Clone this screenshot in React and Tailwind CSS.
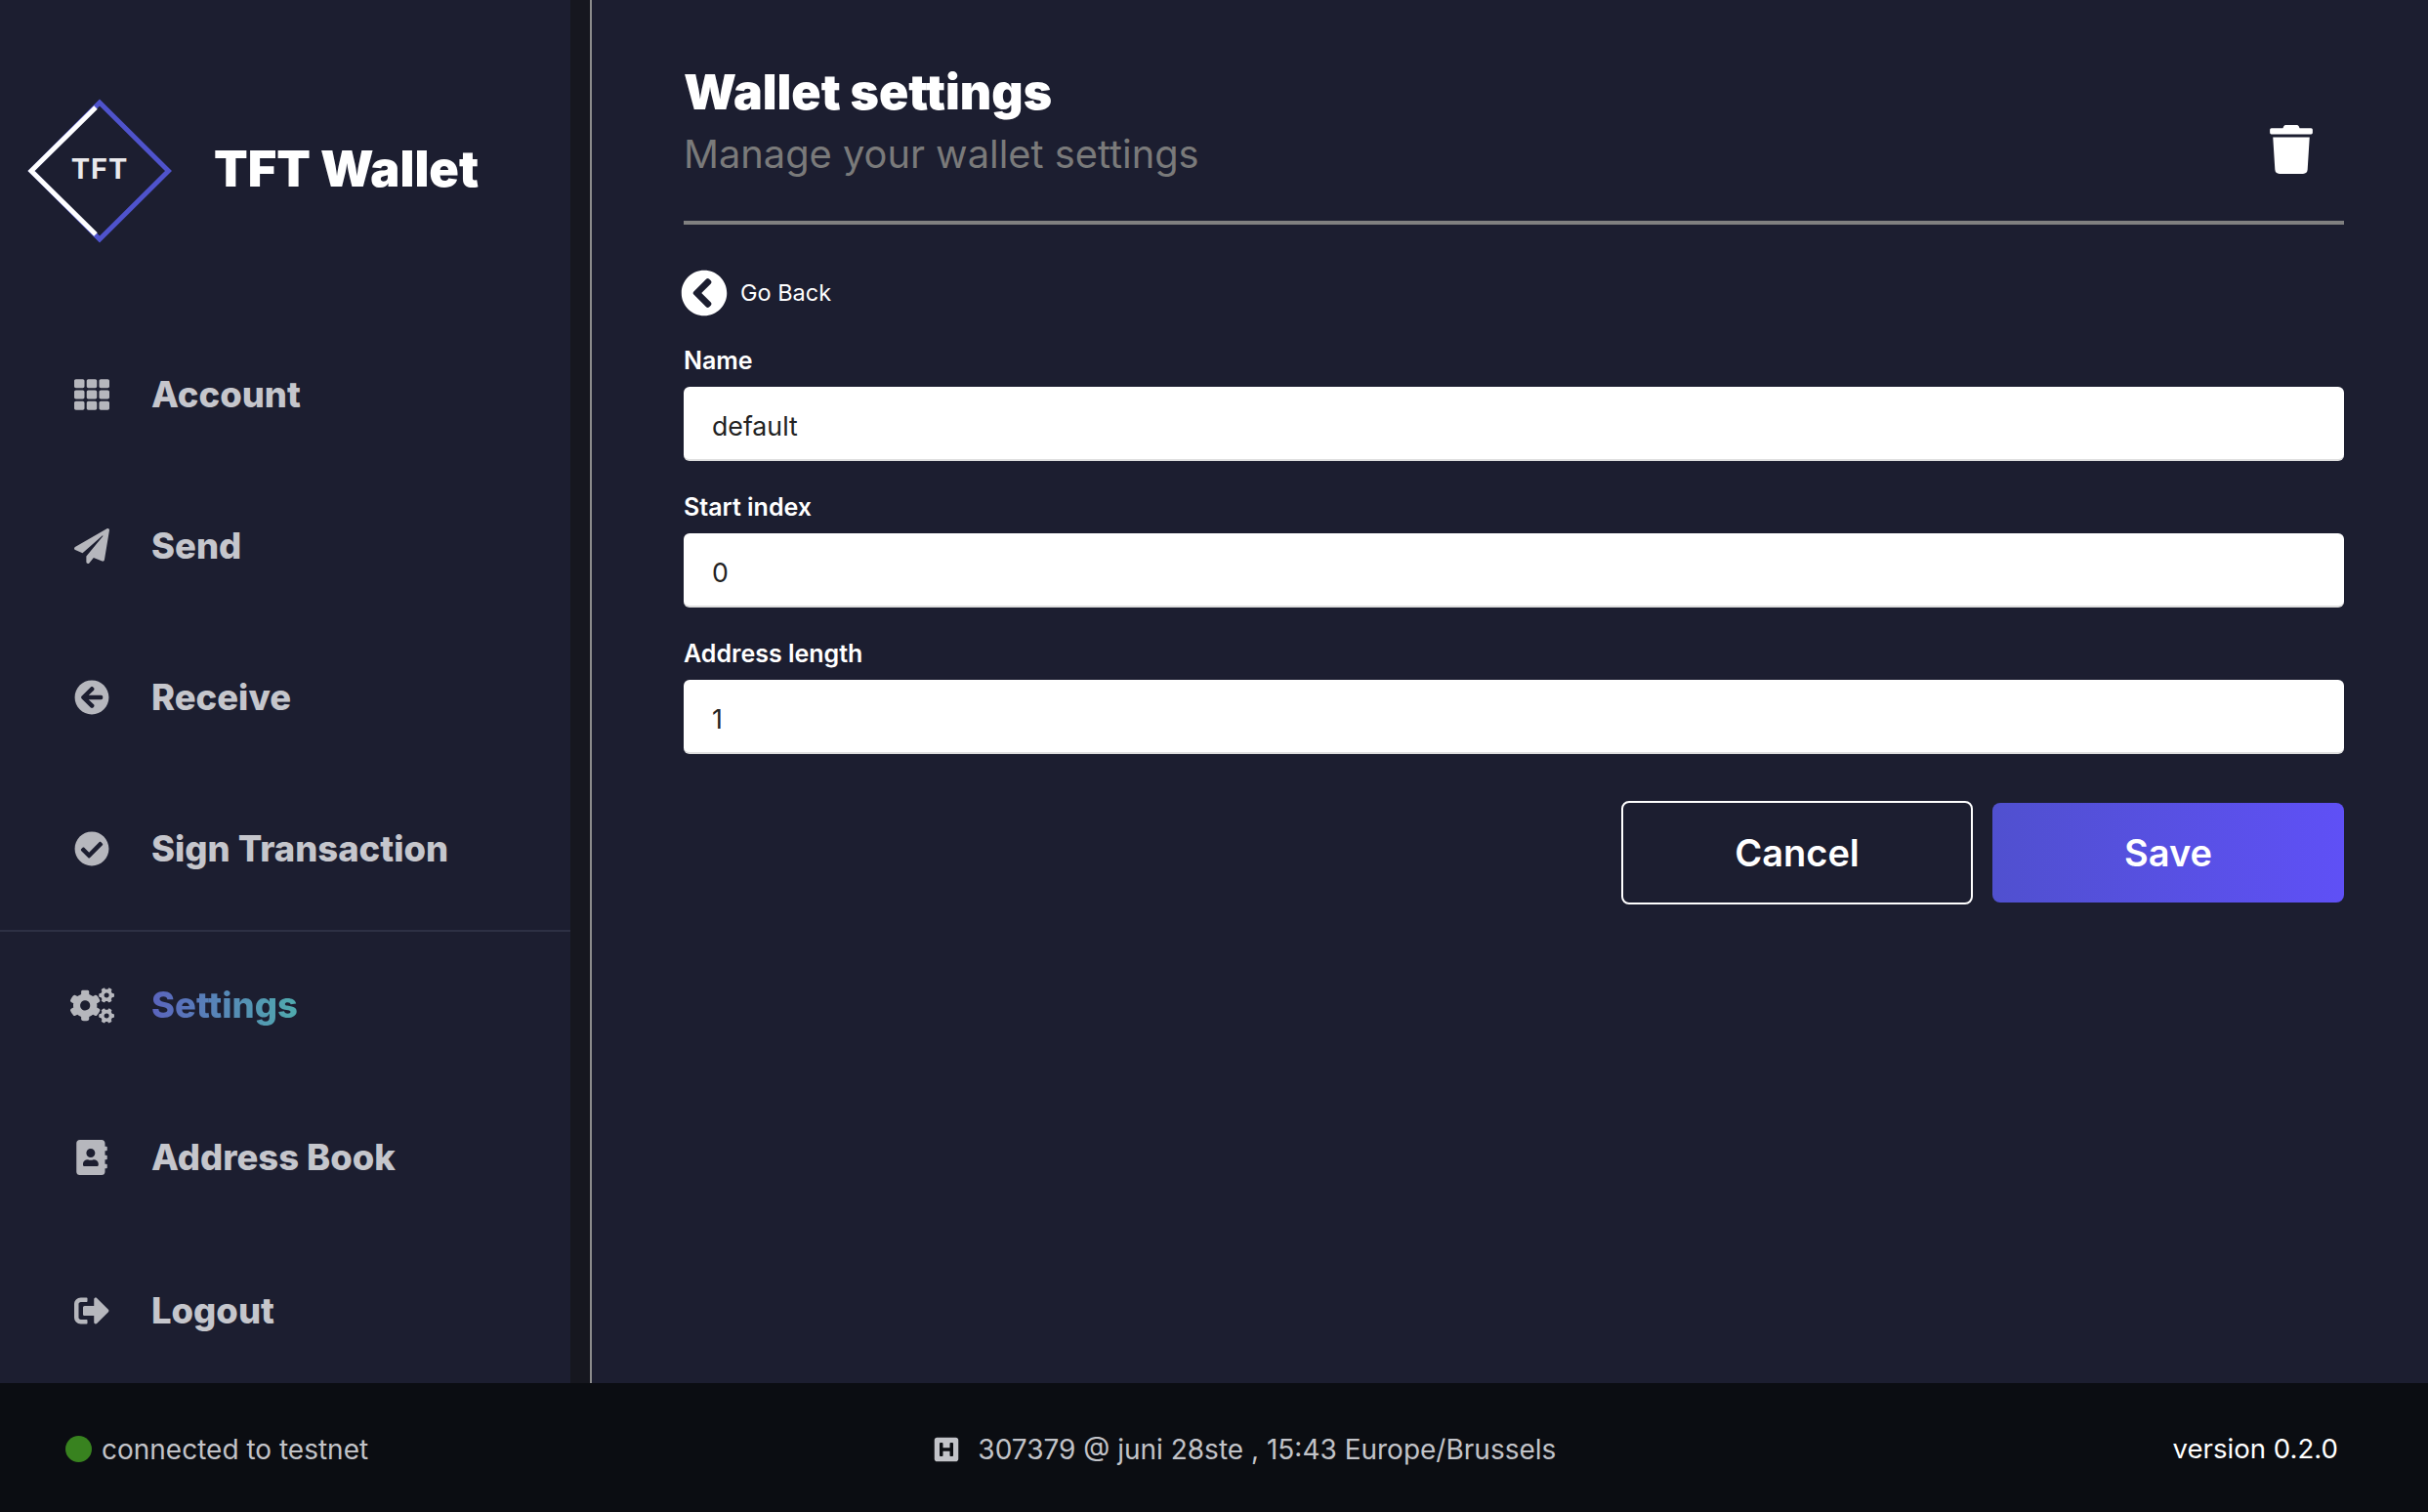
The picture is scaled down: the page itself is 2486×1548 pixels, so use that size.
import { FaTh, FaPaperPlane, FaArrowCircleLeft, FaCheckCircle, FaCogs, FaAddressBook, FaSignOutAlt, FaTrash, FaChevronCircleLeft, FaHSquare } from "react-icons/fa";

function NavItem({ icon: Icon, label, size = 36, active = false, className = "" }) {
  return (
    <div className={`flex items-center h-[100px] ${className}`}>
      <div className="w-[155px] pl-[58px] pr-[25px] flex justify-center text-[#b6b7bd]">
        <Icon size={size} className="shrink-0" />
      </div>
      {active ? (
        <span className="text-[36.4px] font-extrabold text-transparent bg-clip-text bg-gradient-to-r from-[#5a63bd] to-[#4fabad]">{label}</span>
      ) : (
        <span className="text-[36.4px] font-extrabold text-[#c5c6cc]">{label}</span>
      )}
    </div>
  );
}

function Field({ label, value, className = "" }) {
  return (
    <div className={className}>
      <label className="block text-[25px] leading-[32px] font-semibold text-white">{label}</label>
      <input
        readOnly
        value={value}
        className="block w-full h-[76px] mt-[11px] px-[29px] pt-[5px] bg-white rounded-[6px] border-b-2 border-[#dedede] text-[26.7px] text-[#222222] outline-none"
      />
    </div>
  );
}

export default function App() {
  return (
    <div className="w-[2486px] h-[1548px] flex flex-col bg-[#1c1e30] overflow-hidden font-['Inter',sans-serif]">
      <div className="flex h-[1416px]">
        {/* sidebar */}
        <aside className="w-[584px] shrink-0">
          <div className="flex items-center pl-[28px] pt-[101px]">
            <div className="relative w-[148px] h-[148px] flex items-center justify-center">
              <svg viewBox="0 0 148 148" className="absolute inset-0 w-full h-full" fill="none" strokeWidth="5">
                <path d="M74 4 L144.5 74 L74 144 L4 74 Z" stroke="#4f53cc" />
                <path d="M70 9 L4 74 L70 139" stroke="#ffffff" />
              </svg>
              <span className="relative -mt-[5px] text-[29px] font-bold tracking-[1px] text-[#e9e9ec]">TFT</span>
            </div>
            <span className="ml-[43px] -mt-[5px] text-[50.5px] font-black text-white">TFT Wallet</span>
          </div>
          <nav className="flex flex-col mt-[105px]">
            <div className="flex flex-col gap-[55px]">
              <NavItem icon={FaTh} label="Account" />
              <NavItem icon={FaPaperPlane} label="Send" />
              <NavItem icon={FaArrowCircleLeft} label="Receive" />
              <NavItem icon={FaCheckCircle} label="Sign Transaction" />
            </div>
            <div className="mt-[33px] h-[2px] bg-[#2d3044]" />
            <NavItem icon={FaCogs} label="Settings" size={45} active className="mt-[25px]" />
            <NavItem icon={FaAddressBook} label="Address Book" className="mt-[56px]" />
            <NavItem icon={FaSignOutAlt} label="Logout" className="mt-[57px]" />
          </nav>
        </aside>
        <div className="w-[20px] shrink-0 bg-[#16171f]" />
        <div className="w-[2px] shrink-0 bg-[#8c8c8c]" />

        {/* main */}
        <main className="flex-1 pl-[94px] pr-[86px] pt-[40px]">
          <div className="flex items-start justify-between border-b-4 border-[#808080] h-[190px] pt-[15px]">
            <div>
              <h1 className="text-[50px] leading-[78px] font-black text-white">Wallet settings</h1>
              <p className="text-[39.8px] leading-[50px] text-[#7a7a7a]">Manage your wallet settings</p>
            </div>
            <FaTrash size={50} className="text-white mr-[29px] mt-[73px]" />
          </div>
          <div className="flex items-center mt-[46px] -ml-[3px]">
            <FaChevronCircleLeft size={48} className="text-white" />
            <span className="ml-[13px] text-[23.5px] text-white">Go Back</span>
          </div>
          <Field label="Name" value="default" className="mt-[29px]" />
          <Field label="Start index" value="0" className="mt-[31px]" />
          <Field label="Address length" value="1" className="mt-[31px]" />
          <div className="flex justify-end items-center gap-[20px] mt-[48px]">
            <button className="w-[360px] h-[106px] rounded-[8px] border-2 border-white text-[38px] font-semibold text-white">Cancel</button>
            <button className="w-[360px] h-[102px] rounded-[8px] bg-gradient-to-r from-[#5050cf] to-[#5f50f6] text-[38px] font-semibold text-white">Save</button>
          </div>
        </main>
      </div>

      {/* footer */}
      <footer className="h-[132px] bg-[#0b0d12] flex items-center justify-between pl-[67px] pr-[92px] pt-[3px] text-[28px]">
        <div className="flex items-center">
          <span className="w-[27px] h-[27px] rounded-full bg-[#38821f]" />
          <span className="ml-[10px] text-[#c2c3c8]">connected to testnet</span>
        </div>
        <div className="flex items-center mr-[53px] text-[#c2c3c8]">
          <FaHSquare size={28} />
          <span className="ml-[18px]">307379 @ juni 28ste , 15:43 Europe/Brussels</span>
        </div>
        <span className="text-[27.6px] text-white">version 0.2.0</span>
      </footer>
    </div>
  );
}
